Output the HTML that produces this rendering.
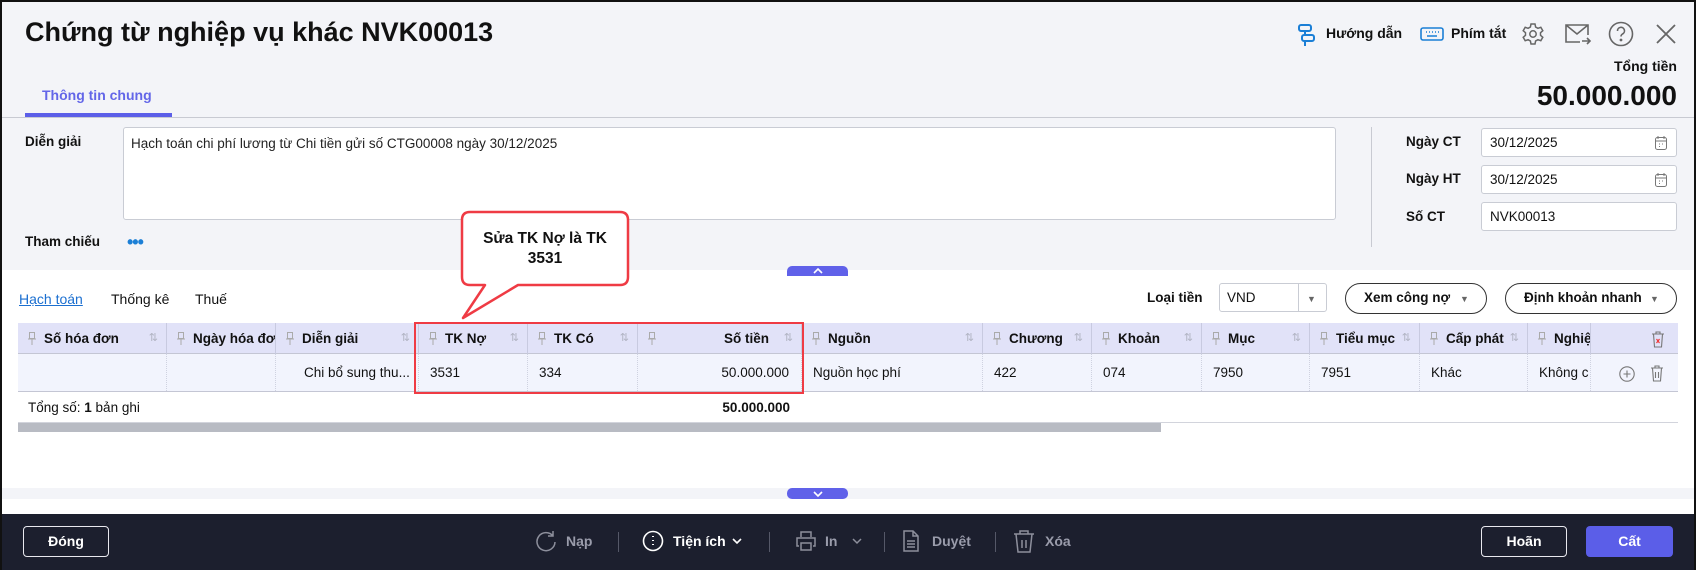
<!DOCTYPE html>
<html><head><meta charset="utf-8"><style>
*{box-sizing:border-box;margin:0;padding:0}
body{width:1696px;height:570px;overflow:hidden;font-family:"Liberation Sans",sans-serif;color:#111;background:#fff;position:relative}
.a{position:absolute}
.frame{left:0;top:0;width:1696px;height:570px;border:2px solid #111;border-bottom:none;pointer-events:none}
.b{font-weight:bold}
.lbl{font-size:13.5px;font-weight:bold;color:#111}
.inp{background:#fff;border:1px solid #c9ccd4;border-radius:3px}
.th{position:absolute;top:0;height:31px;line-height:31px;font-size:13.5px;font-weight:bold;border-right:1px solid #c8cae0}
.td{position:absolute;top:0;height:37px;line-height:37px;font-size:13.5px;border-right:1px dotted #cfd2e0;padding-left:11px;white-space:nowrap;overflow:hidden}
.pin{position:absolute;left:10px;top:9px;width:8px;height:13px}
.sort{position:absolute;right:8px;top:10px;color:#b0b3c2;font-size:11px;font-weight:normal;line-height:11px}
.btxt{color:#9a9cab;font-size:14px;font-weight:bold}
.sep{width:1px;height:20px;background:#555868;top:532px}
</style></head><body>
<div class="a" style="left:0;top:0;width:1696px;height:270px;background:#f3f4f8"></div>
<div class="a b" style="left:25px;top:17px;font-size:27px;color:#111">Chứng từ nghiệp vụ khác NVK00013</div>
<div class="a" style="left:42px;top:87px;font-size:14px;font-weight:bold;color:#6366e8">Thông tin chung</div>
<div class="a" style="left:25px;top:113px;width:147px;height:4px;background:#5b5ee8"></div>
<div class="a" style="left:0;top:117px;width:1696px;height:1px;background:#c8cad2"></div>

<svg class="a" style="left:1296px;top:23px" width="22" height="24" viewBox="0 0 22 24" fill="none" stroke="#1b7fd6" stroke-width="2"><rect x="3" y="2" width="12" height="6" rx="2"/><rect x="6" y="12" width="12" height="6" rx="2"/><path d="M9 8v4M9 18v5"/></svg>
<div class="a" style="left:1326px;top:25px;font-size:14px;font-weight:bold">Hướng dẫn</div>
<svg class="a" style="left:1420px;top:27px" width="24" height="14" viewBox="0 0 24 14" fill="none" stroke="#1b7fd6" stroke-width="1.6"><rect x="1" y="1" width="22" height="12" rx="2"/><path d="M6 5h1M9 5h1M12 5h1M15 5h1M18 5h1M7 9h10"/></svg>
<div class="a" style="left:1451px;top:25px;font-size:14px;font-weight:bold">Phím tắt</div>
<svg class="a" style="left:1521px;top:22px" width="24" height="24" viewBox="0 0 24 24" fill="none" stroke="#666" stroke-width="1.5"><circle cx="12" cy="12" r="3.2"/><path d="M10 2h4l.6 3 2.3 1.3 2.9-1 2 3.4-2.3 2v2.6l2.3 2-2 3.4-2.9-1-2.3 1.3-.6 3h-4l-.6-3-2.3-1.3-2.9 1-2-3.4 2.3-2v-2.6l-2.3-2 2-3.4 2.9 1L9.4 5z"/></svg>
<svg class="a" style="left:1564px;top:22px" width="28" height="24" viewBox="0 0 28 24" fill="none" stroke="#666" stroke-width="1.6"><path d="M16 20H2V3h22v10M2 3l11 9 11-9M18 19h8M23 16l3 3-3 3"/></svg>
<svg class="a" style="left:1608px;top:21px" width="26" height="26" viewBox="0 0 26 26" fill="none" stroke="#666" stroke-width="1.6"><circle cx="13" cy="13" r="11.5"/><path d="M9.5 10a3.5 3.5 0 1 1 5 3c-1 .6-1.5 1.2-1.5 2.5"/><circle cx="13" cy="19" r=".6" fill="#666"/></svg>
<svg class="a" style="left:1655px;top:23px" width="22" height="22" viewBox="0 0 22 22" stroke="#666" stroke-width="1.8"><path d="M2 2l18 18M20 2L2 20"/></svg>
<div class="a" style="right:19px;top:58px;font-size:14px;font-weight:bold">Tổng tiền</div>
<div class="a b" style="right:19px;top:80px;font-size:28px">50.000.000</div>

<div class="a lbl" style="left:25px;top:134px">Diễn giải</div>
<div class="a inp" style="left:123px;top:127px;width:1213px;height:93px"></div>
<div class="a" style="left:131px;top:136px;font-size:13.5px;color:#222">Hạch toán chi phí lương từ Chi tiền gửi số CTG00008 ngày 30/12/2025</div>
<div class="a lbl" style="left:25px;top:234px">Tham chiếu</div>
<div class="a" style="left:127px;top:237px;color:#1b7fd6;font-size:18px;line-height:10px;letter-spacing:-1px;font-weight:bold">•••</div>
<div class="a" style="left:1371px;top:127px;width:1px;height:120px;background:#c8cad2"></div>
<div class="a lbl" style="left:1406px;top:134px">Ngày CT</div>
<div class="a lbl" style="left:1406px;top:171px">Ngày HT</div>
<div class="a lbl" style="left:1406px;top:209px">Số CT</div>
<div class="a inp" style="left:1481px;top:128px;width:196px;height:29px"></div>
<div class="a inp" style="left:1481px;top:165px;width:196px;height:29px"></div>
<div class="a inp" style="left:1481px;top:202px;width:196px;height:29px"></div>
<div class="a" style="left:1490px;top:135px;font-size:13.5px">30/12/2025</div>
<div class="a" style="left:1490px;top:172px;font-size:13.5px">30/12/2025</div>
<div class="a" style="left:1490px;top:209px;font-size:13.5px">NVK00013</div>
<svg class="a" style="left:1655px;top:135px" width="12" height="15" viewBox="0 0 12 15" fill="none" stroke="#777" stroke-width="1"><rect x=".5" y="2.5" width="11" height="12" rx="2"/><path d="M3 1v3M9 1v3M.5 6h11M4 9h1M7 9h1M4 11.5h1"/></svg>
<svg class="a" style="left:1655px;top:172px" width="12" height="15" viewBox="0 0 12 15" fill="none" stroke="#777" stroke-width="1"><rect x=".5" y="2.5" width="11" height="12" rx="2"/><path d="M3 1v3M9 1v3M.5 6h11M4 9h1M7 9h1M4 11.5h1"/></svg>

<div class="a" style="left:787px;top:266px;width:61px;height:10px;background:#6061e9;border-radius:5px 5px 0 0"></div>
<svg class="a" style="left:812px;top:267px" width="12" height="8" viewBox="0 0 12 8" fill="none" stroke="#fff" stroke-width="1.6"><path d="M2 6l4-4 4 4"/></svg>
<div class="a" style="left:0;top:488px;width:1696px;height:11px;background:#f3f4f8"></div>
<div class="a" style="left:787px;top:488px;width:61px;height:11px;background:#6061e9;border-radius:5px"></div>
<svg class="a" style="left:812px;top:490px" width="12" height="8" viewBox="0 0 12 8" fill="none" stroke="#fff" stroke-width="1.6"><path d="M2 2l4 4 4-4"/></svg>

<div class="a" style="left:19px;top:291px;font-size:14px;color:#1b6fd0;text-decoration:underline">Hạch toán</div>
<div class="a" style="left:111px;top:291px;font-size:14px">Thống kê</div>
<div class="a" style="left:195px;top:291px;font-size:14px">Thuế</div>
<div class="a lbl" style="left:1147px;top:290px">Loại tiền</div>
<div class="a inp" style="left:1219px;top:283px;width:108px;height:29px"></div>
<div class="a" style="left:1298px;top:284px;width:1px;height:27px;background:#c9ccd4"></div>
<div class="a" style="left:1227px;top:290px;font-size:13.5px">VND</div>
<div class="a" style="left:1307px;top:294px;font-size:9px;color:#666">▼</div>
<div class="a" style="left:1345px;top:283px;width:142px;height:31px;border:1px solid #333;border-radius:16px"></div>
<div class="a" style="left:1364px;top:290px;font-size:13.5px;font-weight:bold">Xem công nợ</div>
<div class="a" style="left:1460px;top:294px;font-size:9px;color:#666">▼</div>
<div class="a" style="left:1505px;top:283px;width:172px;height:31px;border:1px solid #333;border-radius:16px"></div>
<div class="a" style="left:1524px;top:290px;font-size:13.5px;font-weight:bold">Định khoản nhanh</div>
<div class="a" style="left:1650px;top:294px;font-size:9px;color:#666">▼</div>

<div class="a" style="left:18px;top:323px;width:1660px;height:31px;background:#e1e2f8;border-bottom:1px solid #c4c6d4">
<div class="th" style="left:0;width:149px"><svg class="pin" viewBox="0 0 8 13" fill="none" stroke="#aaa"><path d="M1.5.5h5v6h-5zM0 7h8M4 7v6"/></svg><span style="margin-left:26px">Số hóa đơn</span><span class="sort">⇅</span></div>
<div class="th" style="left:149px;width:109px;overflow:hidden"><svg class="pin" viewBox="0 0 8 13" fill="none" stroke="#aaa"><path d="M1.5.5h5v6h-5zM0 7h8M4 7v6"/></svg><span style="margin-left:26px;white-space:nowrap">Ngày hóa đơ</span></div>
<div class="th" style="left:258px;width:143px"><svg class="pin" viewBox="0 0 8 13" fill="none" stroke="#aaa"><path d="M1.5.5h5v6h-5zM0 7h8M4 7v6"/></svg><span style="margin-left:26px">Diễn giải</span><span class="sort">⇅</span></div>
<div class="th" style="left:401px;width:109px"><svg class="pin" viewBox="0 0 8 13" fill="none" stroke="#aaa"><path d="M1.5.5h5v6h-5zM0 7h8M4 7v6"/></svg><span style="margin-left:26px">TK Nợ</span><span class="sort">⇅</span></div>
<div class="th" style="left:510px;width:110px"><svg class="pin" viewBox="0 0 8 13" fill="none" stroke="#aaa"><path d="M1.5.5h5v6h-5zM0 7h8M4 7v6"/></svg><span style="margin-left:26px">TK Có</span><span class="sort">⇅</span></div>
<div class="th" style="left:620px;width:164px;text-align:right;padding-right:32px"><svg class="pin" viewBox="0 0 8 13" fill="none" stroke="#aaa"><path d="M1.5.5h5v6h-5zM0 7h8M4 7v6"/></svg>Số tiền<span class="sort">⇅</span></div>
<div class="th" style="left:784px;width:181px"><svg class="pin" viewBox="0 0 8 13" fill="none" stroke="#aaa"><path d="M1.5.5h5v6h-5zM0 7h8M4 7v6"/></svg><span style="margin-left:26px">Nguồn</span><span class="sort">⇅</span></div>
<div class="th" style="left:965px;width:109px"><svg class="pin" viewBox="0 0 8 13" fill="none" stroke="#aaa"><path d="M1.5.5h5v6h-5zM0 7h8M4 7v6"/></svg><span style="margin-left:26px">Chương</span><span class="sort">⇅</span></div>
<div class="th" style="left:1074px;width:110px"><svg class="pin" viewBox="0 0 8 13" fill="none" stroke="#aaa"><path d="M1.5.5h5v6h-5zM0 7h8M4 7v6"/></svg><span style="margin-left:26px">Khoản</span><span class="sort">⇅</span></div>
<div class="th" style="left:1184px;width:108px"><svg class="pin" viewBox="0 0 8 13" fill="none" stroke="#aaa"><path d="M1.5.5h5v6h-5zM0 7h8M4 7v6"/></svg><span style="margin-left:26px">Mục</span><span class="sort">⇅</span></div>
<div class="th" style="left:1292px;width:110px"><svg class="pin" viewBox="0 0 8 13" fill="none" stroke="#aaa"><path d="M1.5.5h5v6h-5zM0 7h8M4 7v6"/></svg><span style="margin-left:26px">Tiểu mục</span><span class="sort">⇅</span></div>
<div class="th" style="left:1402px;width:108px"><svg class="pin" viewBox="0 0 8 13" fill="none" stroke="#aaa"><path d="M1.5.5h5v6h-5zM0 7h8M4 7v6"/></svg><span style="margin-left:26px">Cấp phát</span><span class="sort">⇅</span></div>
<div class="th" style="left:1510px;width:63px;overflow:hidden;white-space:nowrap"><svg class="pin" viewBox="0 0 8 13" fill="none" stroke="#aaa"><path d="M1.5.5h5v6h-5zM0 7h8M4 7v6"/></svg><span style="margin-left:26px">Nghiệp</span></div>
<svg class="a" style="left:1633px;top:7px" width="14" height="18" viewBox="0 0 14 18" fill="none" stroke="#777" stroke-width="1.1"><path d="M1 4h12M5 4V2h4v2M2.5 4l1 13h7l1-13"/><path d="M5.5 9l3 4M8.5 9l-3 4" stroke="#e33"/></svg>
</div>
<div class="a" style="left:18px;top:354px;width:1660px;height:38px;background:#f2f4fd;border-bottom:1px solid #c4c6d4">
<div class="td" style="left:0;width:149px"></div>
<div class="td" style="left:149px;width:109px"></div>
<div class="td" style="left:258px;width:143px;padding-left:28px">Chi bổ sung thu...</div>
<div class="td" style="left:401px;width:109px">3531</div>
<div class="td" style="left:510px;width:110px">334</div>
<div class="td" style="left:620px;width:164px;text-align:right;padding-right:12px">50.000.000</div>
<div class="td" style="left:784px;width:181px">Nguồn học phí</div>
<div class="td" style="left:965px;width:109px">422</div>
<div class="td" style="left:1074px;width:110px">074</div>
<div class="td" style="left:1184px;width:108px">7950</div>
<div class="td" style="left:1292px;width:110px">7951</div>
<div class="td" style="left:1402px;width:108px">Khác</div>
<div class="td" style="left:1510px;width:63px">Không c</div>
<svg class="a" style="left:1601px;top:12px" width="16" height="16" viewBox="0 0 16 16" fill="none" stroke="#777" stroke-width="1.1"><circle cx="8" cy="8" r="7.2"/><path d="M8 4.5v7M4.5 8h7"/></svg>
<svg class="a" style="left:1632px;top:10px" width="14" height="18" viewBox="0 0 14 18" fill="none" stroke="#777" stroke-width="1.1"><path d="M1 4h12M5 4V2h4v2M2.5 4l1 13h7l1-13M5.5 8v6M8.5 8v6"/></svg>
</div>
<div class="a" style="left:28px;top:400px;font-size:13.5px">Tổng số: <b>1</b> bản ghi</div>
<div class="a b" style="left:620px;width:170px;text-align:right;top:400px;font-size:13.5px">50.000.000</div>
<div class="a" style="left:18px;top:422px;width:1660px;height:1px;background:#d2d4dc"></div>
<div class="a" style="left:18px;top:423px;width:1143px;height:9px;background:#b8bbc3"></div>

<div class="a" style="left:414px;top:322px;width:390px;height:72px;border:2px solid #ef3b44"></div>
<svg class="a" style="left:455px;top:205px" width="180" height="120" viewBox="455 205 180 120">
<path d="M470 212 H620 Q628 212 628 220 V277 Q628 285 620 285 H518 L463 318 L485 285 H470 Q462 285 462 277 V220 Q462 212 470 212 Z" fill="#fff" stroke="#ef3b44" stroke-width="2.5" stroke-linejoin="round"/>
</svg>
<div class="a b" style="left:462px;width:166px;text-align:center;top:229px;font-size:15.5px;line-height:20px">Sửa TK Nợ là TK<br>3531</div>

<div class="a" style="left:0;top:514px;width:1696px;height:56px;background:#1c1f2e"></div>
<div class="a" style="left:23px;top:526px;width:86px;height:31px;border:1px solid #e8e8ee;border-radius:4px;color:#fff;font-size:14px;font-weight:bold;text-align:center;line-height:29px">Đóng</div>
<svg class="a" style="left:535px;top:530px" width="22" height="22" viewBox="0 0 22 22" fill="none" stroke="#8d8f9c" stroke-width="1.5"><path d="M18 6A9 9 0 1 0 20 12M18 1v5h-5"/></svg>
<div class="a btxt" style="left:566px;top:533px">Nạp</div>
<div class="a sep" style="left:618px"></div>
<svg class="a" style="left:642px;top:530px" width="22" height="22" viewBox="0 0 22 22" fill="none" stroke="#fff" stroke-width="1.6"><circle cx="11" cy="11" r="9.5"/><path d="M11 6v1M11 10v1M11 14v1" stroke-width="2"/></svg>
<div class="a" style="left:673px;top:533px;font-size:14px;font-weight:bold;color:#fff">Tiện ích</div>
<svg class="a" style="left:731px;top:537px" width="12" height="8" viewBox="0 0 12 8" fill="none" stroke="#fff" stroke-width="1.6"><path d="M2 2l4 4 4-4"/></svg>
<div class="a sep" style="left:769px"></div>
<svg class="a" style="left:795px;top:530px" width="22" height="22" viewBox="0 0 22 22" fill="none" stroke="#8d8f9c" stroke-width="1.5"><path d="M6 7V2h10v5M4 16H2V8h18v8h-2M6 13h10v7H6z"/></svg>
<div class="a btxt" style="left:825px;top:533px">In</div>
<svg class="a" style="left:851px;top:537px" width="12" height="8" viewBox="0 0 12 8" fill="none" stroke="#8d8f9c" stroke-width="1.5"><path d="M2 2l4 4 4-4"/></svg>
<div class="a sep" style="left:884px"></div>
<svg class="a" style="left:902px;top:529px" width="18" height="24" viewBox="0 0 18 24" fill="none" stroke="#8d8f9c" stroke-width="1.5"><path d="M2 2h9l5 5v15H2zM11 2v5h5M5 12h8M5 15h8M5 18h8"/></svg>
<div class="a btxt" style="left:932px;top:533px">Duyệt</div>
<div class="a sep" style="left:995px"></div>
<svg class="a" style="left:1013px;top:529px" width="22" height="24" viewBox="0 0 22 24" fill="none" stroke="#8d8f9c" stroke-width="1.5"><path d="M1 5h20M7 5V2h8v3M3 5l2 18h12l2-18M9 11v8M13 11v8"/></svg>
<div class="a btxt" style="left:1045px;top:533px">Xóa</div>
<div class="a" style="left:1481px;top:526px;width:86px;height:31px;border:1px solid #e8e8ee;border-radius:4px;color:#fff;font-size:14px;font-weight:bold;text-align:center;line-height:29px">Hoãn</div>
<div class="a" style="left:1586px;top:526px;width:87px;height:31px;background:#5b5ee8;border-radius:4px;color:#fff;font-size:14px;font-weight:bold;text-align:center;line-height:31px">Cất</div>
<div class="a frame"></div>
</body></html>
